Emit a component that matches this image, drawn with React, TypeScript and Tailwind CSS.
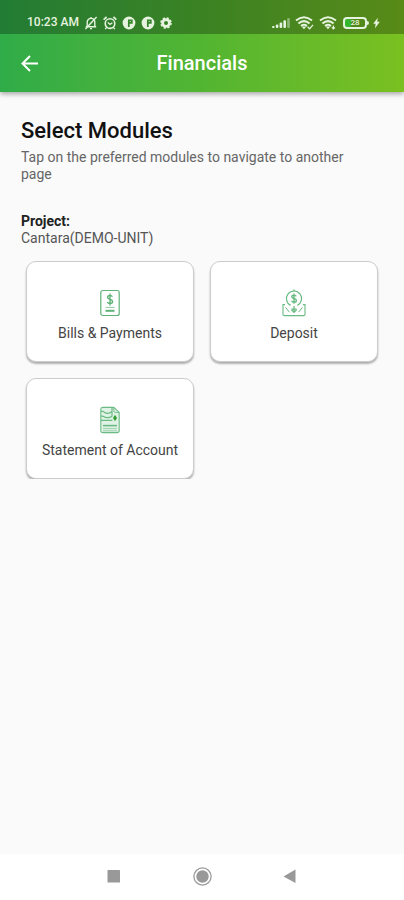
import type { ReactNode } from "react";

const modules = [
  { name: "Bills & Payments", href: "#bills", icon: <BillIcon /> },
  { name: "Deposit", href: "#deposit", icon: <DepositIcon /> },
  { name: "Statement of Account", href: "#statement", icon: <StatementIcon /> },
];

function BillIcon() {
  return (
    <svg width="20" height="28" viewBox="0 0 20 28" fill="none" stroke="#5fb378" aria-hidden="true">
      <rect x="0.8" y="1.5" width="18.4" height="25" rx="2" strokeWidth="1.2" />
      <path d="M12.4 7.8c-.5-1-1.3-1.4-2.4-1.4-1.4 0-2.4.7-2.4 1.9 0 2.8 5 1.3 5 4.2 0 1.2-1.1 2-2.6 2-1.3 0-2.2-.5-2.7-1.5M10 4.4v12" strokeWidth="1.4" />
      <path d="M5.5 18.4h9" strokeWidth="0.7" />
      <path d="M5.5 21.8h9" strokeWidth="2" />
    </svg>
  );
}

function DepositIcon() {
  return (
    <svg width="24" height="28" viewBox="0 0 24 28" fill="none" stroke="#6abb83" aria-hidden="true">
      <path d="M8.6 16.4a7.6 7.6 0 1 1 6.8 0" strokeWidth="1.2" />
      <path d="M12 .6v1.6" strokeWidth="1.4" />
      <path d="M14.2 7.4c-.4-.9-1.2-1.3-2.2-1.3-1.3 0-2.2.6-2.2 1.6 0 2.4 4.6 1.2 4.6 3.7 0 1.1-1 1.8-2.4 1.8-1.2 0-2-.5-2.4-1.3M12 4.4v10.4" strokeWidth="1.4" />
      <path d="M12 17v6.4M9.2 20.6l2.8 2.8 2.8-2.8M9.4 20.2h5.2" strokeWidth="1.3" />
      <path d="M3 15.6H1v9.8q0 1.2 1.2 1.2h19.6q1.2 0 1.2-1.2v-9.8h-2" strokeWidth="1.1" />
      <path d="M3.6 18.4l3.8 4.8M20.4 18.4l-3.8 4.8" strokeWidth="1" />
    </svg>
  );
}

function StatementIcon() {
  return (
    <svg width="20" height="28" viewBox="0 0 20 28" fill="none" stroke="#6abb83" aria-hidden="true">
      <path d="M2.6 1.4h11.2l5.4 5v18q0 2.2-2.2 2.2H3q-2.2 0-2.2-2.2V3.4q0-2 1.8-2z" fill="#e0f2e6" strokeWidth="1.1" />
      <path d="M13.8 1.4v3.4q0 1.6 1.6 1.6h3.6" strokeWidth="0.9" />
      <path d="M1 5.4h2q4.6 4 9 0V2M1 10.2h2q4.6 3 9 0V6M1 14.4h11.4" strokeWidth="1.2" />
      <path d="M3 19.6h14" strokeWidth="1.6" />
      <path d="M3 22.6h14M3 24.8h14" strokeWidth="0.6" />
      <path d="M15 8.8l2 3.2-2 3.2-2-3.2z" fill="#2fa030" stroke="none" />
    </svg>
  );
}

function SilentIcon() {
  return (
    <svg width="14" height="14" viewBox="0 0 14 14" fill="none" stroke="currentColor" strokeWidth="1.4" aria-hidden="true">
      <path d="M1.8 10.8h10.4M3.2 10.6V6.2C3.2 3.8 4.8 2.4 7 2.4s3.8 1.4 3.8 3.8v4.4M7 1v1.4M6 12.6h2" />
      <path d="M12.6 1L1.4 13" />
    </svg>
  );
}

function AlarmIcon() {
  return (
    <svg width="14" height="14" viewBox="0 0 14 14" fill="none" stroke="currentColor" aria-hidden="true">
      <circle cx="7" cy="7.6" r="4.8" strokeWidth="1.6" />
      <path d="M.6 3.6l3-2.6M13.4 3.6l-3-2.6" strokeWidth="1.7" />
      <path d="M4.8 6.6L7 8.4l2.4-1.6M3.6 11.4l-1.4 1.8M10.4 11.4l1.4 1.8" strokeWidth="1.3" />
    </svg>
  );
}

function ParkingIcon() {
  return (
    <svg width="14" height="14" viewBox="0 0 14 14" aria-hidden="true">
      <circle cx="7" cy="7" r="6.4" fill="currentColor" />
      <path d="M6.8 11V4.4h3v2.4H7" fill="none" stroke="#34842a" strokeWidth="1.7" />
    </svg>
  );
}

function GearIcon() {
  return (
    <svg width="12" height="12" viewBox="0 0 12 12" fill="none" stroke="currentColor" aria-hidden="true">
      <circle cx="6" cy="6" r="3.4" strokeWidth="2.8" />
      <circle cx="6" cy="6" r="5" strokeWidth="1.6" strokeDasharray="2.2 1.73" />
    </svg>
  );
}

function SignalIcon() {
  return (
    <svg width="18" height="12" viewBox="0 0 18 12" fill="currentColor" aria-hidden="true">
      <rect x="0" y="9" width="2.6" height="2" rx="1" />
      <rect x="3.8" y="7.6" width="2.6" height="3.4" rx="1" />
      <rect x="7.6" y="5.6" width="2.6" height="5.4" rx="1" />
      <rect x="11.4" y="3.2" width="2.6" height="7.8" rx="1" />
      <rect x="15.2" y="1" width="2.6" height="10" rx="1" opacity="0.45" />
    </svg>
  );
}

function WifiIcon({ children }: { children: ReactNode }) {
  return (
    <svg width="19" height="14" viewBox="0 0 19 14" fill="none" stroke="currentColor" aria-hidden="true">
      <path d="M1 4.6q8-6.6 16 0M3.4 7.4q5.6-4.6 11.2 0M6 10q3-2.4 6 0" strokeWidth="2" />
      <path d="M6.6 10.4h4.8L9 13.2z" fill="currentColor" stroke="none" />
      {children}
    </svg>
  );
}

function BoltIcon() {
  return (
    <svg width="7" height="12" viewBox="0 0 7 12" fill="currentColor" aria-hidden="true">
      <path d="M4.8.8L.2 6.8h2.4L2 11.2l4.8-6.4H4.2z" />
    </svg>
  );
}

function StatusBar() {
  return (
    <div className="flex h-[34px] items-end justify-between bg-black/28 pr-6 pb-1 pl-[27px] text-[#e6f3df]">
      <div className="flex h-[15px] items-center gap-[5px]">
        <span className="text-xs leading-[15px] font-medium">10:23 AM</span>
        <SilentIcon />
        <AlarmIcon />
        <ParkingIcon />
        <ParkingIcon />
        <GearIcon />
      </div>
      <div className="flex h-[15px] items-center gap-[5px]">
        <SignalIcon />
        <WifiIcon>
          <path d="M12.6 10.8l2 2 3.4-4" strokeWidth="1.3" />
        </WifiIcon>
        <WifiIcon>
          <path d="M14.4 9.4v3.6M12.8 11.4l1.6 1.6 1.6-1.6" strokeWidth="1.2" />
        </WifiIcon>
        {/* Battery */}
        <div className="flex items-center gap-1">
          <div className="flex items-center">
            <div className="flex h-3 w-6 items-center justify-center rounded-sm border-2 border-current bg-linear-to-r from-[#35b52c] from-30% to-transparent to-30% text-[8px] leading-none font-medium">
              28
            </div>
            <div className="h-1 w-0.5 rounded-r-sm bg-current" />
          </div>
          <BoltIcon />
        </div>
      </div>
    </div>
  );
}

function AppBar() {
  return (
    <div className="grid h-[58px] grid-cols-[1fr_auto_1fr] items-center px-5 text-white">
      <button type="button" aria-label="Back" className="w-5">
        <svg width="20" height="20" viewBox="0 0 20 20" fill="none" stroke="currentColor" strokeWidth="2">
          <path d="M18 10.5H3M10 3l-7.5 7.5L10 18" />
        </svg>
      </button>
      <h1 className="text-xl leading-6 font-medium">Financials</h1>
    </div>
  );
}

function NavigationBar() {
  return (
    <nav className="flex h-[46px] items-center justify-center gap-[68px] bg-white text-[#999]">
      <button type="button" aria-label="Recent apps" className="flex w-5 justify-center">
        <svg width="20" height="20" viewBox="0 0 20 20" fill="currentColor">
          <rect x="3.5" y="3" width="12.5" height="12.5" rx="0.5" />
        </svg>
      </button>
      <button type="button" aria-label="Home" className="flex w-5 justify-center">
        <svg width="20" height="20" viewBox="0 0 20 20" fill="currentColor">
          <circle cx="10.5" cy="9.5" r="8.6" fill="none" stroke="currentColor" strokeWidth="1.3" />
          <circle cx="10.5" cy="9.5" r="6.2" />
        </svg>
      </button>
      <button type="button" aria-label="Back" className="flex w-5 justify-center">
        <svg width="20" height="20" viewBox="0 0 20 20" fill="currentColor">
          <path d="M15.5 2.5v13.6L3.5 9.4z" />
        </svg>
      </button>
    </nav>
  );
}

export default function App() {
  return (
    <div className="flex min-h-screen flex-col bg-[#fafafa] font-['Roboto',sans-serif]">
      <header className="bg-linear-to-r from-[#2fac48] via-[#52b531] to-[#7ac020] shadow-[0_2px_5px_rgba(0,0,0,0.35)]">
        <StatusBar />
        <AppBar />
      </header>

      <main className="flex-1 px-[21px] pt-[27px]">
        <h2 className="text-[22px] leading-6 font-medium text-[#111]">Select Modules</h2>
        <p className="mt-1.5 pr-6 text-sm leading-[17px] text-[#666]">
          Tap on the preferred modules to navigate to another page
        </p>

        <div className="mt-[30px] text-sm leading-[17px]">
          <h3 className="font-bold text-[#222]">Project:</h3>
          <p className="text-[#555]">Cantara(DEMO-UNIT)</p>
        </div>

        {/* Modules, the scroll area cuts the last row's shadow */}
        <div className="-mx-1 mt-2 grid grid-cols-2 gap-4 overflow-hidden px-[9px] pt-1.5">
          {modules.map((module) => (
            <a
              key={module.name}
              href={module.href}
              className="flex h-[101px] flex-col items-center rounded-[10px] border border-[#ccc] bg-white pt-[27px] shadow-[0_2px_2px_rgba(0,0,0,0.3)]"
            >
              {module.icon}
              <span className="mt-2 text-sm leading-[17px] text-[#444]">{module.name}</span>
            </a>
          ))}
        </div>
      </main>

      <NavigationBar />
    </div>
  );
}
